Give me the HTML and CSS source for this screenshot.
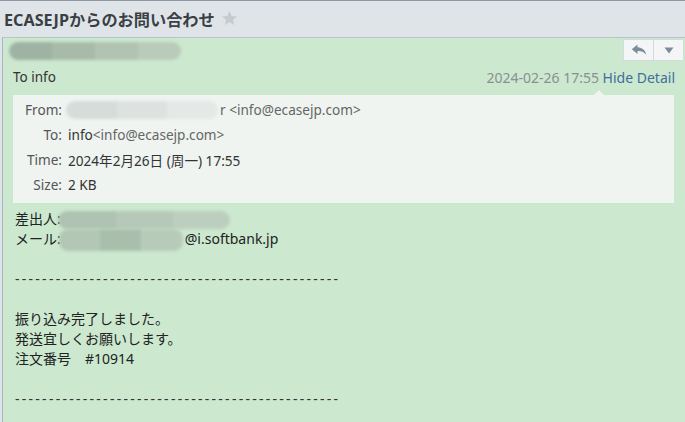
FILE: index.html
```html
<!DOCTYPE html>
<html lang="ja">
<head>
<meta charset="utf-8">
<link rel="stylesheet" href="styles.css">
</head>
<body>
<div class="topline"></div>
<div class="title-bar">
  <h1 class="subject">ECASEJPからのお問い合わせ</h1>
  <svg class="star" width="17" height="17" viewBox="0 0 24 24"><path d="M12 1.5l3.1 7 7.4.6-5.6 4.9 1.7 7.3L12 17.4l-6.6 3.9 1.7-7.3L1.5 9.1l7.4-.6z" fill="#c6cbd0"/></svg>
</div>
<div class="panel">
  <div class="panel-top">
    <div class="blur blur-name"><span></span><span></span><span></span><span></span></div>
    <div class="btns">
      <button class="btn"><svg width="16" height="12" viewBox="0 0 16 12"><path d="M6.5 0.5L0.8 5.2l5.7 4.7V7c3.4-.2 6.2.7 8.7 3.6C14.3 6.4 11.6 3.7 6.5 3.3z" fill="#7d8c99"/></svg></button>
      <button class="btn"><svg width="10" height="7" viewBox="0 0 10 7"><path d="M0.5 0.5h9L5 6.5z" fill="#7d8c99"/></svg></button>
    </div>
  </div>
  <div class="to-row">
    <span class="to">To info</span>
    <span class="meta"><span class="date">2024-02-26 17:55</span> <a class="toggle">Hide Detail</a></span>
  </div>
  <div class="detail">
    <div class="row"><span class="label">From:</span><span class="val"><span class="blur blur-from"><span></span><span></span><span></span></span><span class="addr">r &lt;info@ecasejp.com&gt;</span></span></div>
    <div class="row"><span class="label">To:</span><span class="val">info<span class="addr">&lt;info@ecasejp.com&gt;</span></span></div>
    <div class="row"><span class="label">Time:</span><span class="val">2024年2月26日 (周一) 17:55</span></div>
    <div class="row"><span class="label">Size:</span><span class="val">2 KB</span></div>
  </div>
  <div class="body">
    <div class="line">差出人: <span class="blur blur-b1"><span></span><span></span><span></span></span></div>
    <div class="line">メール:<span class="blur blur-b2"><span></span><span></span><span></span></span>@i.softbank.jp</div>
    <div class="line"></div>
    <div class="line dashes">------------------------------------------------</div>
    <div class="line"></div>
    <div class="line">振り込み完了しました。</div>
    <div class="line">発送宜しくお願いします。</div>
    <div class="line">注文番号　#10914</div>
    <div class="line"></div>
    <div class="line dashes">------------------------------------------------</div>
  </div>
</div>
</body>
</html>
```
FILE: styles.css
```css
html, body {
  margin: 0;
  padding: 0;
  height: 100%;
  overflow: hidden;
}
body {
  background: #dfe4e9;
  font-family: "Noto Sans", "Noto Sans CJK JP", sans-serif;
  color: #333;
}
.topline {
  height: 1px;
  background: #8d98a3;
}
.title-bar {
  height: 36px;
  display: flex;
  align-items: center;
  padding-left: 4px;
}
.subject {
  margin: 0;
  font-size: 16.2px;
  font-weight: bold;
  color: #3a3f44;
  font-family: "Noto Sans", "Noto Sans CJK JP", sans-serif;
}
.star {
  margin-left: 6px;
  margin-top: -1px;
}
.panel {
  margin-left: 2px;
  border-left: 1px solid #a9b6c0;
  border-top: 1px solid #b8c4cc;
  background: #cce8cf;
  height: 400px;
}
.panel-top {
  display: flex;
  justify-content: space-between;
  height: 25px;
}
.blur {
  display: inline-flex;
  filter: blur(1.5px);
  border-radius: 9px;
  overflow: hidden;
  vertical-align: middle;
}
.blur span {
  flex: 1;
  height: 100%;
}
.blur-name {
  width: 172px;
  height: 18px;
  margin: 4px 0 0 6px;
}
.blur-name span:nth-child(1) { background: #9fb3a3; }
.blur-name span:nth-child(2) { background: #a8bba9; }
.blur-name span:nth-child(3) { background: #b1c3b2; }
.blur-name span:nth-child(4) { background: #b9cbba; }
.btns {
  display: flex;
  margin-top: 1px;
  margin-right: 1px;
}
.btn {
  width: 31px;
  height: 22px;
  padding: 0;
  border: 1px solid #d4dade;
  background: #f3f5f6;
  display: flex;
  align-items: center;
  justify-content: center;
  margin-left: -1px;
}
.to-row {
  display: flex;
  justify-content: space-between;
  align-items: center;
  height: 26px;
  padding: 0 10px 0 10px;
  font-size: 14px;
  margin-top: 1px;
}
.to { color: #333; font-size: 13.5px; }
.date { color: #8a8f93; }
.toggle { color: #3f6f9c; }
.detail {
  position: relative;
  margin: 5px 11px 0 10px;
  background: #eff4f1;
  padding: 2px 0 6px 0;
  font-size: 13.6px;
}
.detail::before {
  content: "";
  position: absolute;
  top: -5px;
  right: 70px;
  border-left: 5px solid transparent;
  border-right: 5px solid transparent;
  border-bottom: 5px solid #eff4f1;
}
.row {
  display: flex;
  align-items: center;
  height: 25px;
}
.label {
  width: 49px;
  text-align: right;
  color: #555;
  margin-right: 6px;
}
.val {
  color: #333;
  display: flex;
  align-items: center;
}
.addr { color: #666; }
.blur-from {
  width: 152px;
  height: 18px;
  margin-left: -2px;
  margin-right: 2px;
}
.blur-from span:nth-child(1) { background: #d6dcda; }
.blur-from span:nth-child(2) { background: #dde2e0; }
.blur-from span:nth-child(3) { background: #e4e8e6; }
.body {
  padding: 6px 0 0 12px;
  font-size: 14px;
  color: #222;
}
.line {
  height: 20px;
  line-height: 20px;
  white-space: pre;
}
.blur-b1 {
  width: 172px;
  height: 18px;
  margin-left: -6px;
}
.blur-b1 span:nth-child(1) { background: #aec3b1; }
.blur-b1 span:nth-child(2) { background: #b6c9b8; }
.blur-b1 span:nth-child(3) { background: #bccfbe; }
.blur-b2 {
  width: 124px;
  height: 22px;
  margin-left: -2px;
  margin-right: 2px;
}
.blur-b2 span:nth-child(1) { background: #b3c7b5; }
.blur-b2 span:nth-child(2) { background: #a9bfac; }
.blur-b2 span:nth-child(3) { background: #b7cbb9; }
.dashes {
  letter-spacing: 2.27px;
  color: #333;
}
```
